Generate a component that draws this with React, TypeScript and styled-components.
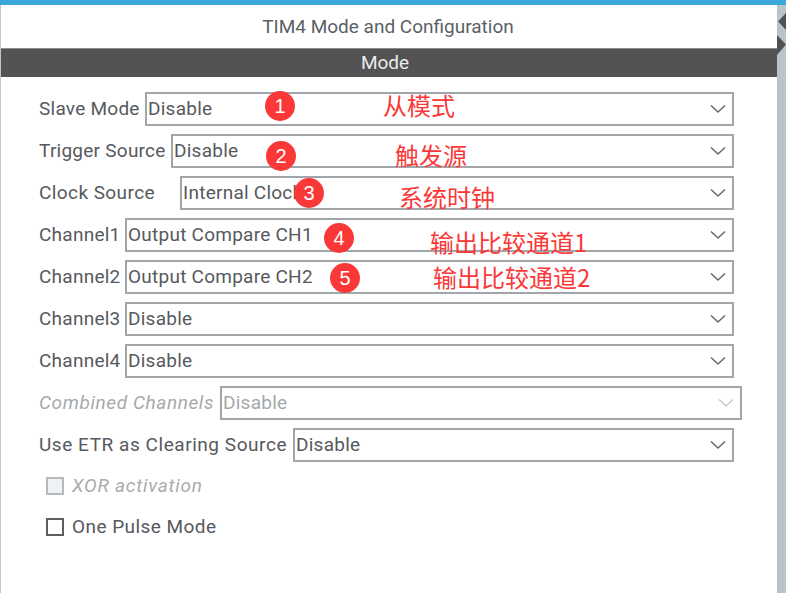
import React from "react";
import styled, { createGlobalStyle } from "styled-components";

const Global = createGlobalStyle`
  html, body { margin: 0; padding: 0; background: #fff; }
  body { width: 786px; height: 593px; overflow: hidden; font-family: Roboto, "Liberation Sans", sans-serif; }
`;

const Page = styled.div`
  position: relative;
  width: 786px;
  height: 593px;
  display: flex;
  flex-direction: column;
  overflow: hidden;
`;
const TopBar = styled.div`
  height: 5px;
  flex: none;
  background: #3aa8da;
`;
const Body = styled.div`
  flex: 1;
  display: flex;
  min-height: 0;
`;
const Panel = styled.main`
  flex: 1;
  min-width: 0;
  background: #fff;
  border-left: 1px solid #b8c8d2;
  display: flex;
  flex-direction: column;
`;
const Side = styled.aside`
  width: 9px;
  flex: none;
  background: #b8c4cb;
  padding-top: 5px;
  box-sizing: border-box;
`;
const Title = styled.h1`
  margin: 0;
  height: 43px;
  flex: none;
  box-sizing: border-box;
  padding: 10px 2px 0 0;
  font: 400 19px/24px Roboto, sans-serif;
  color: #5a5f66;
  text-align: center;
`;
const ModeBar = styled.div`
  height: 29px;
  flex: none;
  box-sizing: border-box;
  background: #525352;
  border-top: 1px solid #8c8e8e;
  padding-right: 8px;
  color: #e8ecec;
  font: 400 19px/27px Roboto, sans-serif;
  text-align: center;
`;
const Form = styled.div`
  display: flex;
  flex-direction: column;
  gap: 8px;
  padding: 15px 0 0 37px;
`;
const Row = styled.div<{ $right?: number }>`
  display: flex;
  align-items: center;
  height: 34px;
  padding-right: ${(p) => p.$right ?? 43}px;
`;
const Label = styled.span<{ $w: number; $off?: boolean; $track?: number }>`
  width: ${(p) => p.$w}px;
  flex: none;
  box-sizing: border-box;
  padding-left: 1px;
  font: ${(p) => (p.$off ? "italic" : "normal")} 400 19px/24px Roboto, sans-serif;
  letter-spacing: ${(p) => p.$track ?? 0.25}px;
  color: ${(p) => (p.$off ? "#a6a9ab" : "#56595e")};
  white-space: nowrap;
`;
const Select = styled.div<{ $off?: boolean }>`
  flex: 1;
  height: 34px;
  box-sizing: border-box;
  border: 2px solid #a0a6aa;
  background: #fff;
  display: flex;
  align-items: center;
  justify-content: space-between;
  padding: 0 6px 0 1px;
  font: 400 19px/24px Roboto, sans-serif;
  letter-spacing: 0.25px;
  color: ${(p) => (p.$off ? "#a4a8ab" : "#56595e")};
  white-space: nowrap;
  svg { display: block; }
`;
const Checks = styled.div`
  display: flex;
  flex-direction: column;
  gap: 21px;
  padding-top: 6px;
`;
const CheckRow = styled.label`
  display: flex;
  align-items: center;
  gap: 8px;
  height: 20px;
  padding-left: 8px;
`;
const Box = styled.span<{ $off?: boolean }>`
  width: 18px;
  height: 18px;
  box-sizing: border-box;
  border: 2px solid ${(p) => (p.$off ? "#b4b9bc" : "#5c5f60")};
  background: ${(p) => (p.$off ? "#eff1f2" : "#fff")};
  flex: none;
`;
const CheckText = styled.span<{ $off?: boolean }>`
  font: ${(p) => (p.$off ? "italic" : "normal")} 400 19px/24px Roboto, sans-serif;
  letter-spacing: ${(p) => (p.$off ? 0.75 : 0.45)}px;
  color: ${(p) => (p.$off ? "#a9acae" : "#56595e")};
`;
const Badge = styled.span<{ $x: number; $y: number }>`
  position: absolute;
  left: ${(p) => p.$x - 15}px;
  top: ${(p) => p.$y - 15}px;
  width: 30px;
  height: 30px;
  border-radius: 50%;
  background: #fb3838;
  color: #fff;
  font: 400 20px/30px "Liberation Sans", sans-serif;
  text-align: center;
`;
const Note = styled.span<{ $x: number; $y: number }>`
  position: absolute;
  left: ${(p) => p.$x}px;
  top: ${(p) => p.$y}px;
  color: #fb3838;
  font: 400 24px/32px "Noto Sans CJK SC", sans-serif;
  white-space: nowrap;
`;

const Chevron = ({ off }: { off?: boolean }) => (
  <svg width="16" height="10" viewBox="0 0 16 10" fill="none">
    <path d="M1 1.5 L8 8 L15 1.5" stroke={off ? "#c8cbcd" : "#6a6d70"} strokeWidth="1.6" />
  </svg>
);

type RowData = { label: string; w: number; value: string; off?: boolean; right?: number; track?: number };
const rows: RowData[] = [
  { label: "Slave Mode", w: 107, value: "Disable" },
  { label: "Trigger Source", w: 133, value: "Disable" },
  { label: "Clock Source", w: 142, value: "Internal Clock", track: 0.42 },
  { label: "Channel1", w: 87, value: "Output Compare CH1" },
  { label: "Channel2", w: 87, value: "Output Compare CH2" },
  { label: "Channel3", w: 87, value: "Disable" },
  { label: "Channel4", w: 87, value: "Disable" },
  { label: "Combined Channels", w: 182, value: "Disable", off: true, right: 35, track: 0.6 },
  { label: "Use ETR as Clearing Source", w: 255, value: "Disable", track: 0.55 },
];

const badges = [
  [280, 106],
  [281, 156],
  [309, 193],
  [339, 238],
  [345, 278],
];
const notes: [string, number, number][] = [
  ["从模式", 383, 89],
  ["触发源", 395, 139],
  ["系统时钟", 399, 181],
  ["输出比较通道1", 430, 226],
  ["输出比较通道2", 433, 261],
];

export default function App() {
  return (
    <Page>
      <Global />
      <TopBar />
      <Body>
        <Panel>
          <Title>TIM4 Mode and Configuration</Title>
          <ModeBar>Mode</ModeBar>
          <Form>
            {rows.map((r) => (
              <Row key={r.label} $right={r.right}>
                <Label $w={r.w} $off={r.off} $track={r.track}>{r.label}</Label>
                <Select $off={r.off}>
                  {r.value}
                  <Chevron off={r.off} />
                </Select>
              </Row>
            ))}
            <Checks>
              <CheckRow>
                <Box $off />
                <CheckText $off>XOR activation</CheckText>
              </CheckRow>
              <CheckRow>
                <Box />
                <CheckText>One Pulse Mode</CheckText>
              </CheckRow>
            </Checks>
          </Form>
        </Panel>
        <Side>
          <svg width="9" height="46" viewBox="0 0 9 46">
            <path d="M9 3 L1 11.5 L9 20 Z" fill="#4f5254" />
            <path d="M0 25 L9 34.5 L0 45 Z" fill="#4f5254" />
          </svg>
        </Side>
      </Body>
      {badges.map(([x, y], i) => (
        <Badge key={i} $x={x} $y={y}>{i + 1}</Badge>
      ))}
      {notes.map(([t, x, y]) => (
        <Note key={t} $x={x} $y={y}>{t}</Note>
      ))}
    </Page>
  );
}
